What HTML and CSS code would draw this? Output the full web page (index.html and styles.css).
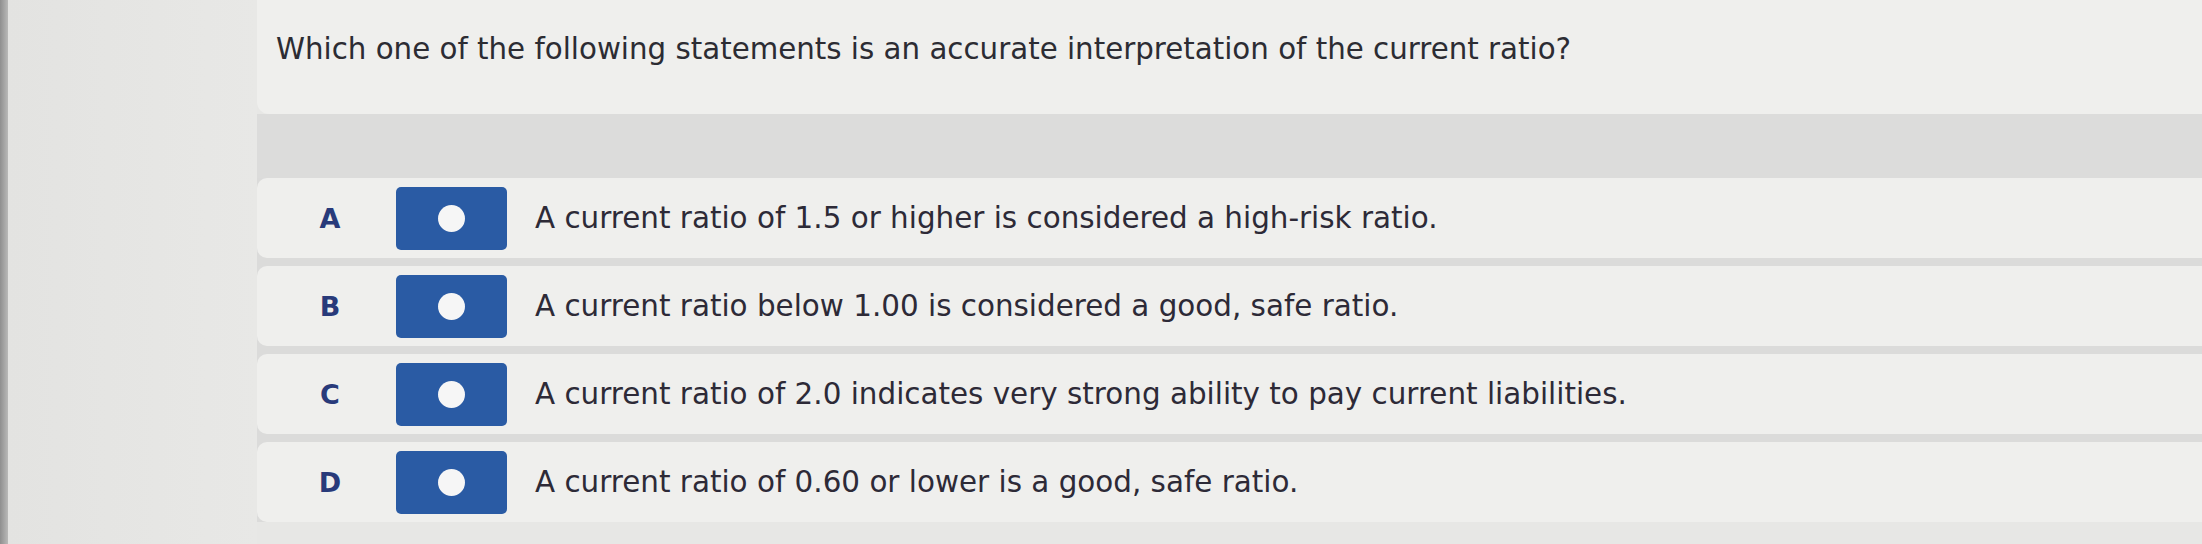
FILE: index.html
```html
<!DOCTYPE html>
<html lang="en">
<head>
<meta charset="utf-8">
<title>Question</title>
<link rel="stylesheet" href="styles.css">
</head>
<body>
<div class="page">
  <div class="edge"></div>
  <div class="gutter"></div>
  <main class="content">
    <section class="question">
      <p class="prompt">Which one of the following statements is an accurate interpretation of the current ratio?</p>
    </section>
    <div class="band"></div>
    <ul class="options">
      <li class="option">
        <span class="letter">A</span>
        <span class="radio"><span class="dot"></span></span>
        <span class="answer">A current ratio of 1.5 or higher is considered a high-risk ratio.</span>
      </li>
      <li class="option">
        <span class="letter">B</span>
        <span class="radio"><span class="dot"></span></span>
        <span class="answer">A current ratio below 1.00 is considered a good, safe ratio.</span>
      </li>
      <li class="option">
        <span class="letter">C</span>
        <span class="radio"><span class="dot"></span></span>
        <span class="answer">A current ratio of 2.0 indicates very strong ability to pay current liabilities.</span>
      </li>
      <li class="option">
        <span class="letter">D</span>
        <span class="radio"><span class="dot"></span></span>
        <span class="answer">A current ratio of 0.60 or lower is a good, safe ratio.</span>
      </li>
    </ul>
  </main>
</div>
</body>
</html>
```

FILE: styles.css
```css
html, body {
  margin: 0;
  padding: 0;
  height: 100%;
}

body {
  background: #e7e7e5;
  font-family: "DejaVu Sans", Verdana, sans-serif;
  overflow: hidden;
}

.page {
  display: flex;
  height: 544px;
}

.edge {
  width: 8px;
  flex: none;
  background: linear-gradient(to right, #8f8f8f, #b9b9b8);
}

.gutter {
  width: 249px;
  flex: none;
  background: linear-gradient(to right, #e3e3e1, #e8e8e6);
}

.content {
  flex: 1;
  display: flex;
  flex-direction: column;
}

.question {
  height: 114px;
  background: #efefed;
  border-bottom-left-radius: 12px;
  padding-left: 19px;
  box-sizing: border-box;
  display: flex;
  align-items: flex-start;
}

.prompt {
  margin: 32px 0 0;
  font-size: 29.3px;
  color: #2c2c33;
  line-height: 34px;
}

.band {
  height: 64px;
  background: #dcdcdb;
}

.options {
  list-style: none;
  margin: 0;
  padding: 0 0 8px;
  display: flex;
  flex-direction: column;
  gap: 8px;
  background: linear-gradient(to bottom, #dbdbda calc(100% - 8px), #e7e7e5 calc(100% - 8px));
}

.option {
  height: 80px;
  background: #efefed;
  border-radius: 10px 0 0 10px;
  display: flex;
  align-items: center;
}

.letter {
  width: 132px;
  padding-left: 7px;
  flex: none;
  text-align: center;
  font-weight: bold;
  font-size: 27px;
  color: #283a7a;
}

.radio {
  width: 111px;
  height: 63px;
  flex: none;
  background: #2a5ba4;
  border-radius: 5px;
  display: flex;
  align-items: center;
  justify-content: center;
}

.dot {
  width: 27px;
  height: 27px;
  border-radius: 50%;
  background: #f6f6f6;
}

.answer {
  margin-left: 28px;
  font-size: 29.4px;
  color: #2d2a37;
}
```
